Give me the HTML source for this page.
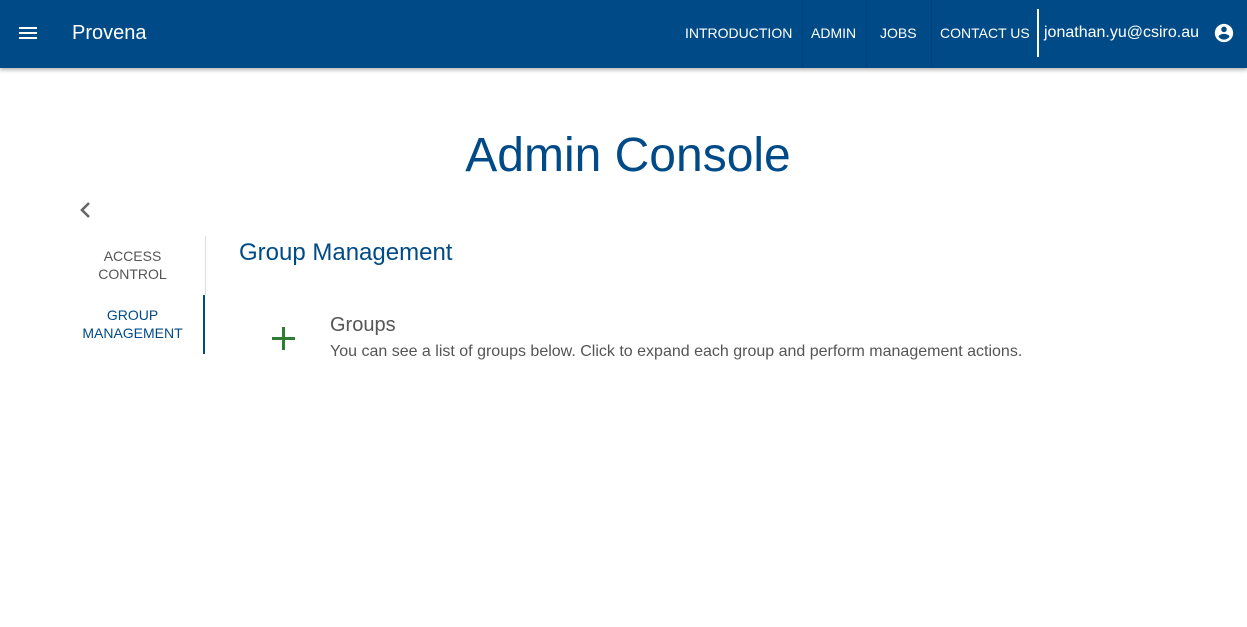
<!DOCTYPE html>
<html><head><style>
body{margin:0;width:1247px;height:627px;background:#fff;font-family:"Liberation Sans",sans-serif;position:relative;overflow:hidden}
.bar{position:absolute;left:0;top:0;width:1247px;height:68px;background:#004b87;box-shadow:0 2px 4px rgba(0,0,0,.3)}
.t{position:absolute;white-space:nowrap}
.nav{color:#fff;font-size:14px;top:25px}
.sep{position:absolute;top:0;width:1px;height:68px;background:#00427a}
</style></head><body>
<div class="bar">
<svg style="position:absolute;left:18px;top:24px" width="20" height="18"><rect x="1" y="3" width="18" height="2" fill="#fff"/><rect x="1" y="8" width="18" height="2" fill="#fff"/><rect x="1" y="13" width="18" height="2" fill="#fff"/></svg>
<div class="t" style="left:72px;top:22px;color:#fff;font-size:20px">Provena</div>
<div class="t nav" style="left:685px">INTRODUCTION</div>
<div class="sep" style="left:802px"></div>
<div class="t nav" style="left:811px">ADMIN</div>
<div class="sep" style="left:866px"></div>
<div class="t nav" style="left:880px">JOBS</div>
<div class="sep" style="left:931px"></div>
<div class="t nav" style="left:940px">CONTACT US</div>
<div style="position:absolute;left:1037px;top:9px;width:2px;height:48px;background:#fff"></div>
<div class="t" style="left:1044px;top:24px;color:#fff;font-size:16px">jonathan.yu@csiro.au</div>
<svg style="position:absolute;left:1213px;top:22px" width="22" height="22" viewBox="0 0 24 24"><path fill="#fff" d="M12 2C6.48 2 2 6.48 2 12s4.480 10 10 10 10-4.48 10-10S17.52 2 12 2zm0 3c1.66 0 3 1.34 3 3s-1.34 3-3 3-3-1.34-3-3 1.34-3 3-3zm0 14.2c-2.5 0-4.71-1.28-6-3.22.03-1.99 4-3.080 6-3.08 1.99 0 5.97 1.09 6 3.08-1.29 1.94-3.5 3.22-6 3.22z"/></svg>
</div>
<div class="t" style="left:0;width:1256px;text-align:center;top:128px;font-size:48px;color:#004b87">Admin Console</div>
<svg style="position:absolute;left:77px;top:200px" width="16" height="20"><path d="M12 3L5 10l7 7" stroke="#666" stroke-width="2.6" fill="none"/></svg>
<div style="position:absolute;left:205px;top:236px;width:1px;height:59px;background:#ddd"></div>
<div style="position:absolute;left:203px;top:295px;width:2px;height:59px;background:#004b87"></div>
<div class="t" style="left:60px;width:145px;text-align:center;top:247px;font-size:14px;line-height:18px;color:#555">ACCESS<br>CONTROL</div>
<div class="t" style="left:60px;width:145px;text-align:center;top:306px;font-size:14px;line-height:18px;color:#004b87">GROUP<br>MANAGEMENT</div>
<div class="t" style="left:239px;top:239px;font-size:24px;color:#004b87">Group Management</div>
<svg style="position:absolute;left:272px;top:327px" width="23" height="23"><rect x="10" y="0" width="3" height="23" fill="#2e7d32"/><rect x="0" y="10" width="23" height="3" fill="#2e7d32"/></svg>
<div class="t" style="left:330px;top:314px;font-size:20px;color:#555">Groups</div>
<div class="t" style="left:330px;top:343px;font-size:16px;color:#555">You can see a list of groups below. Click to expand each group and perform management actions.</div>
</body></html>
